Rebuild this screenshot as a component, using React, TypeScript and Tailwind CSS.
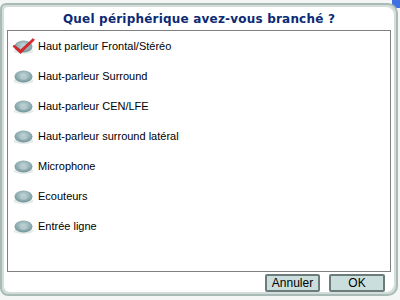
import React from "react";

interface Device {
  label: string;
  checked?: boolean;
}

const devices: Device[] = [
  { label: "Haut parleur Frontal/Stéréo", checked: true },
  { label: "Haut-parleur Surround" },
  { label: "Haut-parleur CEN/LFE" },
  { label: "Haut-parleur surround latéral" },
  { label: "Microphone" },
  { label: "Ecouteurs" },
  { label: "Entrée ligne" },
];

const JackIcon: React.FC<{ checked?: boolean }> = ({ checked }) => (
  <svg width="24" height="20" viewBox="0 0 24 20" className="shrink-0">
    <defs>
      <radialGradient id="jackFill" cx="50%" cy="40%" r="65%">
        <stop offset="0%" stopColor="#c4d8da" />
        <stop offset="55%" stopColor="#94b1b5" />
        <stop offset="100%" stopColor="#6b8b92" />
      </radialGradient>
    </defs>
    <ellipse cx="11.5" cy="15" rx="10" ry="3" fill="#e3ebea" />
    <ellipse cx="11.5" cy="10.5" rx="9" ry="6" fill="url(#jackFill)" />
    <ellipse cx="11.5" cy="11.5" rx="3.5" ry="2" fill="#b3c9cc" />
    {checked && (
      <path
        d="M2 9 L8.5 14 L21 2.5 L22.5 4 L8.5 17.5 L1 10.5 Z"
        fill="#e0262a"
        stroke="#b01418"
        strokeWidth="0.6"
      />
    )}
  </svg>
);

export default function App() {
  return (
    <div className="w-[400px] h-[300px] bg-[#f4f6f5] overflow-hidden relative font-['Liberation_Sans',Arial,sans-serif]">
      <div className="absolute top-0 right-0 w-[8px] h-[8px] bg-[#3f6fe0]" />
      <div className="relative mt-[3px] w-[398px] h-[293px] rounded-tl-[6px] rounded-tr-[10px] rounded-bl-[8px] rounded-br-[10px] border-2 border-[#a9bbb6] bg-[#d3ddd9] p-[2px]">
        <div className="flex flex-col w-full h-full rounded-tl-[4px] rounded-tr-[8px] rounded-bl-[6px] rounded-br-[8px] bg-white px-[3px]">
          <div className="h-[23px] flex items-center justify-center pt-[1px] text-[#0d2a74] font-bold text-[12px] tracking-[0.2px] font-['DejaVu_Sans',Verdana,sans-serif]">
            Quel périphérique avez-vous branché ?
          </div>
          <div className="h-[242px] border border-[#808080] bg-white pl-[4px]">
            {devices.map((d, i) => (
              <div key={i} className="h-[30px] flex items-center gap-[2px]">
                <JackIcon checked={d.checked} />
                <span className="text-[11px] text-black leading-none">{d.label}</span>
              </div>
            ))}
          </div>
          <div className="flex justify-end gap-[9px] pt-[2px] pr-[6px]">
            <button className="w-[55px] h-[18px] rounded-[2px] border-2 border-[#6c7c7a] bg-[#cadfdd] text-[12px] leading-none text-black">
              Annuler
            </button>
            <button className="w-[56px] h-[18px] rounded-[2px] border-2 border-[#6c7c7a] bg-[#cadfdd] text-[12px] leading-none text-black">
              OK
            </button>
          </div>
        </div>
      </div>
    </div>
  );
}
